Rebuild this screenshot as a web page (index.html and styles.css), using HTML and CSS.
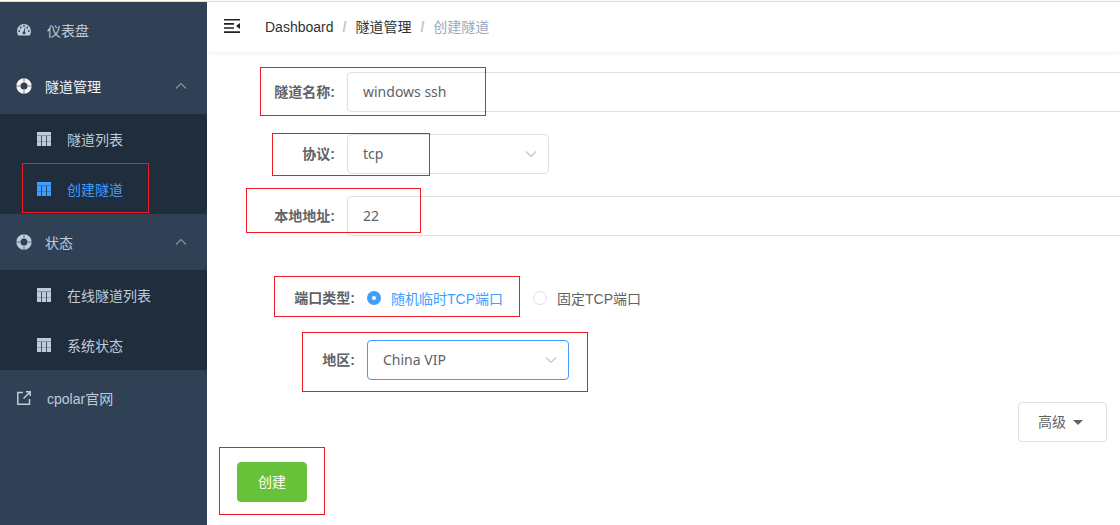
FILE: index.html
```html
<!DOCTYPE html>
<html lang="zh-CN">
<head>
    <meta charset="UTF-8">
    <meta name="viewport" content="width=device-width, initial-scale=1.0">
    <title>创建隧道</title>
    <link rel="stylesheet" href="styles.css">
</head>
<body>
    <!-- shared icons -->
    <svg class="sprite" aria-hidden="true">
        <symbol id="icon-ring" viewBox="0 0 16 16">
            <circle cx="8" cy="8" r="5.6" fill="none" stroke="currentColor" stroke-width="4.200"/>
            <path d="M8 0v4.400M8 11.600V16M0 8h4.400M11.600 8H16" stroke="#304156" stroke-width="1" opacity="0.600"/>
        </symbol>
        <symbol id="icon-table" viewBox="0 0 14 14">
            <path d="M0 0h14v14H0z" fill="currentColor"/>
            <path d="M0 3.500h14" stroke="#1f2d3d" stroke-width="1" opacity="0.350"/>
            <path d="M4.500 4v10M9.500 4v10" stroke="#1f2d3d" stroke-width="1" opacity="0.750"/>
            <path d="M0 9.500h14" stroke="#1f2d3d" stroke-width="1" opacity="0.250"/>
        </symbol>
        <symbol id="icon-arrow" viewBox="0 0 12 12">
            <path d="M1 3.500l5 5 5-5" fill="none" stroke="currentColor" stroke-width="1.100"/>
        </symbol>
    </svg>

    <div class="app">
        <nav class="sidebar">
            <a class="menu-item" href="#">
                <svg class="icon" viewBox="0 0 14 14">
                    <path d="M0 8a7 7 0 0 1 14 0c0 1.600-.4 2.900-1.100 4.500H1.100C.4 10.900 0 9.600 0 8z" fill="currentColor"/>
                    <g fill="#304156">
                        <circle cx="2.200" cy="8" r="0.900"/>
                        <circle cx="3.700" cy="4.500" r="0.900"/>
                        <circle cx="7" cy="3" r="0.900"/>
                        <circle cx="10.300" cy="4.500" r="0.900"/>
                        <circle cx="11.800" cy="8" r="0.900"/>
                        <circle cx="7" cy="9.800" r="1.500"/>
                    </g>
                    <path d="M7 9.800L8 5" stroke="#304156" stroke-width="0.900"/>
                </svg>
                <span>仪表盘</span>
            </a>

            <button class="menu-title open" type="button">
                <svg class="icon-lg"><use href="#icon-ring"/></svg>
                <span>隧道管理</span>
                <svg class="fold"><use href="#icon-arrow"/></svg>
            </button>
            <div class="submenu">
                <a class="menu-item" href="#">
                    <svg class="icon"><use href="#icon-table"/></svg>
                    <span>隧道列表</span>
                </a>
                <a class="menu-item active" href="#">
                    <svg class="icon"><use href="#icon-table"/></svg>
                    <span>创建隧道</span>
                    <i class="mark mark-menu"></i>
                </a>
            </div>

            <button class="menu-title" type="button">
                <svg class="icon-lg"><use href="#icon-ring"/></svg>
                <span>状态</span>
                <svg class="fold"><use href="#icon-arrow"/></svg>
            </button>
            <div class="submenu">
                <a class="menu-item" href="#">
                    <svg class="icon"><use href="#icon-table"/></svg>
                    <span>在线隧道列表</span>
                </a>
                <a class="menu-item" href="#">
                    <svg class="icon"><use href="#icon-table"/></svg>
                    <span>系统状态</span>
                </a>
            </div>

            <a class="menu-item" href="#">
                <svg class="icon" viewBox="0 0 14 14" fill="none" stroke="currentColor" stroke-width="1.500">
                    <path d="M6 1.500H.8v11.700h11.700V8"/>
                    <path d="M9 .8h4.200V5M13 1L6.500 7.500"/>
                </svg>
                <span>cpolar官网</span>
            </a>
        </nav>

        <div class="main">
            <header class="navbar">
                <button class="hamburger" type="button" aria-label="收起菜单">
                    <svg viewBox="0 0 16 14">
                        <path d="M0 .8h16M0 4.900h10M0 9h10M0 13.100h16" stroke="currentColor" stroke-width="1.600"/>
                        <path d="M16 4v6l-4-3z" fill="currentColor"/>
                    </svg>
                </button>
                <nav class="breadcrumb">
                    <a href="#">Dashboard</a>
                    <span class="separator">/</span>
                    <a href="#">隧道管理</a>
                    <span class="separator">/</span>
                    <span class="current">创建隧道</span>
                </nav>
            </header>

            <form class="tunnel-form">
                <div class="form-item">
                    <label for="name">隧道名称:</label>
                    <input class="field wide" id="name" type="text" value="windows ssh">
                    <i class="mark mark-name"></i>
                </div>
                <div class="form-item">
                    <label for="protocol">协议:</label>
                    <div class="select">
                        <select class="field" id="protocol">
                            <option>tcp</option>
                        </select>
                        <svg class="caret"><use href="#icon-arrow"/></svg>
                    </div>
                    <i class="mark mark-protocol"></i>
                </div>
                <div class="form-item">
                    <label for="addr">本地地址:</label>
                    <input class="field wide" id="addr" type="text" value="22">
                    <i class="mark mark-addr"></i>
                </div>

                <div class="panel">
                    <div class="form-item" role="radiogroup" aria-labelledby="port-type">
                        <span class="label" id="port-type">端口类型:</span>
                        <div class="radios">
                            <label class="radio"><input type="radio" name="port" checked><span>随机临时TCP端口</span></label>
                            <label class="radio"><input type="radio" name="port"><span>固定TCP端口</span></label>
                        </div>
                        <i class="mark mark-port"></i>
                    </div>
                    <div class="form-item">
                        <label for="region">地区:</label>
                        <div class="select">
                            <select class="field focused" id="region">
                                <option>China VIP</option>
                            </select>
                            <svg class="caret"><use href="#icon-arrow"/></svg>
                        </div>
                        <i class="mark mark-region"></i>
                    </div>
                    <div class="more">
                        <button class="btn" type="button">高级<i class="triangle"></i></button>
                    </div>
                </div>

                <div class="actions">
                    <button class="btn btn-success" type="button">创建</button>
                    <i class="mark mark-create"></i>
                </div>
            </form>
        </div>
    </div>
</body>
</html>
```
FILE: styles.css
```css
* {
    margin: 0;
    padding: 0;
    box-sizing: border-box;
}

body {
    font-family: "Liberation Sans", "Noto Sans CJK SC", sans-serif;
    font-size: 14px;
    color: #606266;
    background: #fff;
    border-top: 1px solid #fbfdf0;
}

button {
    font: inherit;
    border: none;
    background: none;
    cursor: pointer;
}

a {
    color: inherit;
    text-decoration: none;
}

.sprite {
    position: absolute;
    width: 0;
    height: 0;
}

.app {
    display: flex;
    min-height: calc(100vh - 1px);
    border-top: 1px solid #e0e2d2;
}

/* sidebar */
.sidebar {
    width: 207px;
    flex-shrink: 0;
    background: #304156;
    color: #bfcbd9;
}

.menu-item,
.menu-title {
    position: relative;
    display: flex;
    align-items: center;
    width: 100%;
    height: 56px;
    padding: 0 20px 0 17px;
    gap: 16px;
    color: #bfcbd9;
}

.menu-title {
    padding-left: 16px;
    gap: 13px;
}

.menu-title.open {
    color: #f4f4f5;
}

.submenu {
    background: #1f2d3d;
}

.submenu .menu-item {
    height: 50px;
    padding-left: 37px;
}

.submenu .menu-item.active {
    color: #409eff;
}

.icon {
    width: 14px;
    height: 14px;
}

.icon-lg {
    width: 16px;
    height: 16px;
}

.fold {
    width: 12px;
    height: 12px;
    margin-left: auto;
    color: #909399;
    transform: rotate(180deg);
}

/* header */
.main {
    flex: 1;
    min-width: 0;
    overflow: hidden;
}

.navbar {
    display: flex;
    align-items: center;
    height: 50px;
    padding-left: 17px;
    gap: 25px;
    box-shadow: 0 1px 4px rgba(0, 21, 41, 0.08);
}

.hamburger {
    width: 16px;
    height: 14px;
    margin-bottom: 2px;
    color: #222;
}

.hamburger svg {
    display: block;
}

.breadcrumb {
    display: flex;
    align-items: baseline;
    gap: 9px;
    line-height: 50px;
    color: #303133;
}

.separator {
    color: #c0c4cc;
    font-weight: bold;
}

.breadcrumb .current {
    color: #97a8be;
}

/* form */
.tunnel-form {
    padding: 20px;
}

.form-item {
    position: relative;
    display: flex;
    height: 40px;
    margin-bottom: 22px;
}

.form-item > label,
.form-item > .label {
    width: 120px;
    flex-shrink: 0;
    padding-right: 12px;
    line-height: 40px;
    text-align: right;
    font-weight: bold;
}

.field {
    width: 100%;
    height: 40px;
    padding: 0 15px 2px;
    border: 1px solid #dcdfe6;
    border-radius: 4px;
    outline: none;
    background: #fff;
    color: #606266;
    font-family: "Noto Sans", "Noto Sans CJK SC", sans-serif;
    font-size: 14px;
    appearance: none;
}

.field.focused {
    border-color: #409eff;
}

/* long inputs run past the right side of the page */
.field.wide {
    flex: 0 0 100%;
}

.select {
    position: relative;
    width: 202px;
}

.caret {
    position: absolute;
    top: 14px;
    right: 12px;
    width: 12px;
    height: 12px;
    color: #c0c4cc;
    pointer-events: none;
}

.panel {
    padding: 20px;
}

.radios {
    display: flex;
    align-items: center;
    gap: 30px;
}

.radio {
    display: flex;
    align-items: center;
    gap: 10px;
}

.radio input {
    width: 14px;
    height: 14px;
    border: 1px solid #dcdfe6;
    border-radius: 50%;
    background: #fff;
    appearance: none;
}

.radio input:checked {
    border: 5px solid #409eff;
}

.radio input:checked + span {
    color: #409eff;
}

.more {
    display: flex;
    justify-content: flex-end;
    margin-right: -27px;
}

.btn {
    display: flex;
    align-items: center;
    height: 40px;
    padding: 0 19px 2px;
    gap: 7px;
    border: 1px solid #dcdfe6;
    border-radius: 4px;
    background: #fff;
    color: #606266;
}

.btn-success {
    padding: 0 20px 2px;
    border-color: #67c23a;
    background: #67c23a;
    color: #fff;
}

.triangle {
    margin: 2px 4px 0 0;
    border: 5px solid transparent;
    border-top-color: #606266;
    border-bottom: none;
}

.actions {
    position: relative;
    padding-left: 10px;
}

/* red frames around the steps to follow */
.mark {
    position: absolute;
    border: 1px solid #ed1c24;
    pointer-events: none;
}

.mark-menu {
    left: 22px;
    top: -1px;
    width: 127px;
    height: 50px;
}

.mark-name {
    left: 33px;
    top: -5px;
    width: 226px;
    height: 49px;
}

.mark-protocol {
    left: 45px;
    top: -1px;
    width: 158px;
    height: 43px;
}

.mark-addr {
    left: 19px;
    top: -8px;
    width: 175px;
    height: 45px;
}

.mark-port {
    left: 27px;
    top: -2px;
    width: 246px;
    height: 41px;
}

.mark-region {
    left: 55px;
    top: -8px;
    width: 286px;
    height: 60px;
}

.mark-create {
    left: -8px;
    top: -15px;
    width: 106px;
    height: 68px;
}
```
